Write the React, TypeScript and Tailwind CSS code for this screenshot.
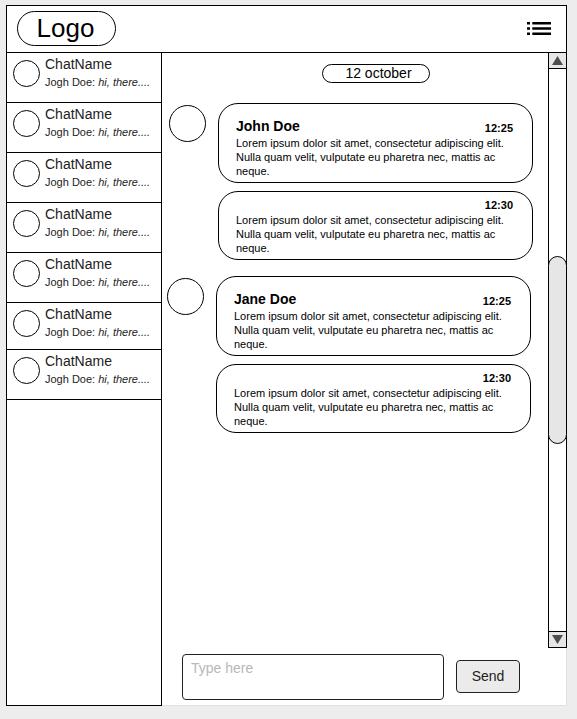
const LOREM =
  'Lorem ipsum dolor sit amet, consectetur adipiscing elit. Nulla quam velit, vulputate eu pharetra nec, mattis ac neque.';

type Message = { time: string; text: string };
type Group = { author: string; inset: string; messages: Message[] };

const groups: Group[] = [
  {
    author: 'John Doe',
    inset: 'pl-[7px] pr-[15px]',
    messages: [
      { time: '12:25', text: LOREM },
      { time: '12:30', text: LOREM },
    ],
  },
  {
    author: 'Jane Doe',
    inset: 'pl-[5px] pr-[17px]',
    messages: [
      { time: '12:25', text: LOREM },
      { time: '12:30', text: LOREM },
    ],
  },
];

const chats = [
  { id: 1, height: 'h-[50px]' },
  { id: 2, height: 'h-[50px]' },
  { id: 3, height: 'h-[50px]' },
  { id: 4, height: 'h-[50px]' },
  { id: 5, height: 'h-[50px]' },
  { id: 6, height: 'h-[47px]' },
  { id: 7, height: 'h-[50px]' },
];

function Header() {
  return (
    <header className="flex h-12 shrink-0 items-center justify-between border border-black bg-white pr-[15px] pb-px pl-2.5">
      <a
        href="#"
        className="flex h-[35px] w-[99px] items-center justify-center rounded-full border border-black pr-0.5 pb-0.5 text-[26px] leading-8"
      >
        Logo
      </a>
      <button type="button" aria-label="Menu">
        <svg width="24" height="13" viewBox="0 0 24 13" aria-hidden="true">
          <path d="M0 0h3v2.4H0zM5.3 0H24v2.4H5.3zM0 5.3h3v2.4H0zM5.3 5.3H24v2.4H5.3zM0 10.6h3V13H0zM5.3 10.6H24V13H5.3z" />
        </svg>
      </button>
    </header>
  );
}

function Sidebar() {
  return (
    <nav className="w-[156px] shrink-0 border-x border-b border-black bg-white">
      <ul>
        {chats.map((chat) => (
          <li key={chat.id} className={`border-b border-black ${chat.height}`}>
            <button type="button" className="flex w-full gap-[5px] pl-1.5 text-left">
              <span className="mt-[7px] size-[27px] shrink-0 rounded-full border border-black" />
              <span className="flex flex-col gap-[3px] pt-[3px] whitespace-nowrap text-[#222]">
                <span className="text-sm leading-4">ChatName</span>
                <span className="text-[11px] leading-[14px]">
                  Jogh Doe: <em>hi, there....</em>
                </span>
              </span>
            </button>
          </li>
        ))}
      </ul>
    </nav>
  );
}

function Bubble({ message, author }: { message: Message; author?: string }) {
  return (
    <article
      className={`rounded-[20px] border border-black pr-[19px] pb-1 pl-[17px] ${author ? 'pt-3' : 'pt-[5px]'}`}
    >
      <div className="flex items-end justify-between">
        {author && <h2 className="text-sm leading-5 font-bold">{author}</h2>}
        <time className="ml-auto text-[11px] leading-4 font-bold">{message.time}</time>
      </div>
      <p className="text-[11px] leading-[14px]">{message.text}</p>
    </article>
  );
}

function Scrollbar() {
  return (
    <div className="flex w-[19px] shrink-0 flex-col border-x border-black">
      <button
        type="button"
        aria-label="Scroll up"
        className="flex h-4 shrink-0 items-center justify-center border-b border-black bg-[#e6e6e6]"
      >
        <svg width="11" height="9" viewBox="0 0 11 9" aria-hidden="true">
          <path d="M5.5 0L11 9H0z" fill="#4d4d4d" />
        </svg>
      </button>
      <div className="-mx-px flex grow flex-col justify-center">
        <div className="h-1/3 rounded-full border border-black bg-[#e6e6e6]" />
      </div>
      <button
        type="button"
        aria-label="Scroll down"
        className="flex h-[17px] shrink-0 items-center justify-center border-y border-black bg-[#e6e6e6]"
      >
        <svg width="11" height="9" viewBox="0 0 11 9" aria-hidden="true">
          <path d="M5.5 9L0 0h11z" fill="#4d4d4d" />
        </svg>
      </button>
    </div>
  );
}

function Composer() {
  return (
    <form
      className="flex shrink-0 items-start gap-3 border-r border-b border-[#e0e0e0] pt-1.5 pr-[46px] pb-[5px] pl-5"
      onSubmit={(e) => e.preventDefault()}
    >
      <textarea
        aria-label="Message"
        placeholder="Type here"
        className="h-[46px] min-w-0 flex-1 resize-none rounded border border-[#222] bg-white px-2 py-[5px] text-sm leading-4 outline-none placeholder:text-[#b8b8b8]"
      />
      <button
        type="submit"
        className="mt-1.5 h-[33px] w-16 rounded border border-[#222] bg-[#ebebeb] pb-px text-sm text-[#222]"
      >
        Send
      </button>
    </form>
  );
}

export default function App() {
  return (
    <div className="flex h-screen flex-col bg-[#ededed] pt-[5px] pr-2.5 pb-[13px] pl-1.5 font-['Liberation_Sans',Arial,sans-serif] text-black">
      <Header />
      <div className="flex min-h-0 grow">
        <Sidebar />
        <main className="flex min-w-0 grow flex-col bg-white">
          <div className="flex min-h-0 grow">
            <section className="flex min-w-0 grow flex-col pt-[11px]">
              <div className="flex justify-center pl-[42px]">
                <span className="flex h-[19px] w-[108px] items-center justify-center rounded-full border border-black pb-px pl-[5px] text-sm leading-4">
                  12 october
                </span>
              </div>
              <div className="mt-5 flex flex-col gap-4">
                {groups.map((group) => (
                  <div key={group.author} className={`flex gap-3 ${group.inset}`}>
                    <span className="mt-0.5 size-[37px] shrink-0 rounded-full border border-black" />
                    <div className="flex min-w-0 grow flex-col gap-2">
                      {group.messages.map((message, i) => (
                        <Bubble
                          key={message.time}
                          message={message}
                          author={i === 0 ? group.author : undefined}
                        />
                      ))}
                    </div>
                  </div>
                ))}
              </div>
            </section>
            <Scrollbar />
          </div>
          <Composer />
        </main>
      </div>
    </div>
  );
}
